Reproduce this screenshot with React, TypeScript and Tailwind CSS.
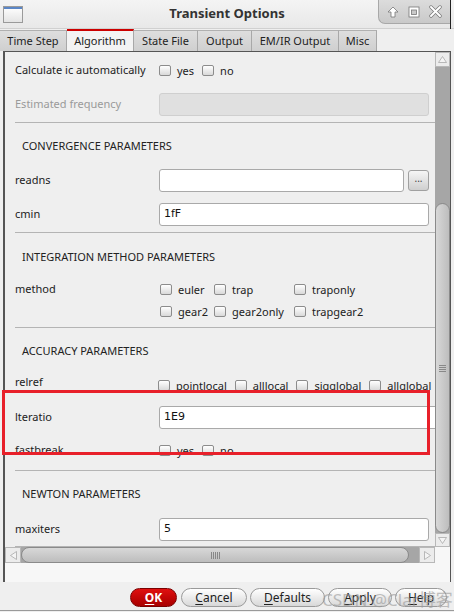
import React from "react";

const FONT = { fontFamily: '"Noto Sans", "Open Sans", "DejaVu Sans", sans-serif' };

function Check({ label }: { label: string }) {
  return (
    <div className="flex items-center">
      <span className="h-[11px] w-[12px] rounded-[2px] border border-[#8c8c8c] bg-gradient-to-b from-[#ffffff] to-[#d9d9d9]" />
      <span className="ml-[6px] text-[11px] leading-none text-[#222]">{label}</span>
    </div>
  );
}

function Field({ value, disabled }: { value?: string; disabled?: boolean }) {
  return (
    <div
      className={
        disabled
          ? "h-[23px] flex-1 rounded-[3px] border border-[#cfcfcf] bg-[#e0e0e0]"
          : "flex h-[23px] flex-1 items-center rounded-[3px] border border-[#a9a9a9] bg-white pl-[4px] text-[11px] font-medium text-[#111]"
      }
      style={{ fontFamily: '"DejaVu Sans", sans-serif' }}
    >
      {value}
    </div>
  );
}

function Row({ label, children, className, gray }: { label: string; children: React.ReactNode; className?: string; gray?: boolean }) {
  return (
    <div className={"flex items-center pl-[10px] pr-[6px] " + (className ?? "")}>
      <div className={"w-[144px] shrink-0 text-[11px] " + (gray ? "text-[#9a9a9a]" : "text-[#222]")}>{label}</div>
      {children}
    </div>
  );
}

function Sep({ className }: { className?: string }) {
  return <div className={"ml-[10px] h-px bg-[#b4b4b4] " + (className ?? "")} />;
}

function Heading({ text, h }: { text: string; h: string }) {
  return <div className={"flex items-center pl-[17px] text-[11px] text-[#222] " + h}>{text}</div>;
}

function Pill({ children, red }: { children: React.ReactNode; red?: boolean }) {
  return (
    <div
      className={
        red
          ? "flex h-[19px] w-[47px] items-center justify-center rounded-full border border-[#7a0000] bg-gradient-to-b from-[#e01010] to-[#a80000] text-[12px] font-bold text-white"
          : "flex h-[19px] items-center justify-center rounded-full border border-[#9a9a9a] bg-gradient-to-b from-[#ffffff] to-[#d8d8d8] text-[12px] text-[#222]"
      }
    >
      {children}
    </div>
  );
}

export default function App() {
  const tabs = ["Time Step", "Algorithm", "State File", "Output", "EM/IR Output", "Misc"];
  const tabW = ["w-[67px]", "w-[67px]", "w-[64px]", "w-[54px]", "w-[87px]", "w-[38px]"];
  return (
    <div className="relative h-[612px] w-[454px] overflow-hidden bg-[#efefef]" style={FONT}>
      {/* title bar */}
      <div className="relative flex h-[29px] items-center border-b border-[#d0d0d0] bg-gradient-to-b from-[#f4f4f4] to-[#e8e8e8]">
        <div className="ml-[3px] h-[17px] w-[20px] border border-[#9a9a9a] bg-gradient-to-b from-[#ffffff] to-[#e4e4e4]">
          <div className="h-[2px] bg-[#5b86c6]" />
        </div>
        <div className="absolute left-0 right-0 top-[4px] text-center text-[13px] font-bold text-[#333]">Transient Options</div>
        <div className="absolute right-[4px] top-0 flex h-[24px] w-[72px] items-center justify-around rounded-bl-[7px] border-b border-l border-[#a8a8a8] bg-gradient-to-b from-[#dcdcdc] to-[#c9c9c9] px-[4px]">
          <svg width="12" height="12" viewBox="0 0 12 12">
            <path d="M6 1 L11 6 L8 6 L8 11 L4 11 L4 6 L1 6 Z" fill="#fff" stroke="#777" strokeWidth="0.8" />
          </svg>
          <svg width="12" height="12" viewBox="0 0 12 12">
            <rect x="1" y="1" width="10" height="10" fill="#fff" stroke="#777" strokeWidth="0.8" />
            <rect x="3.5" y="4" width="5" height="4.5" fill="#c9c9c9" stroke="#777" strokeWidth="0.8" />
          </svg>
          <svg width="13" height="13" viewBox="0 0 13 13">
            <path d="M2 2 L11 11 M11 2 L2 11" stroke="#777" strokeWidth="3.4" strokeLinecap="round" />
            <path d="M2 2 L11 11 M11 2 L2 11" stroke="#fff" strokeWidth="2" strokeLinecap="round" />
          </svg>
        </div>
        <div className="absolute right-[3px] top-0 h-[29px] w-px bg-[#222]" />
      </div>

      {/* tabs */}
      <div className="flex h-[22px] items-end">
        {tabs.map((t, i) => (
          <div
            key={t}
            className={
              (i === 1
                ? "h-[22px] border-t-2 border-t-[#cc0000] bg-[#f3f3f3] "
                : "h-[21px] border-t border-t-[#b0b0b0] bg-gradient-to-b from-[#dedede] to-[#cfcfcf] ") +
              "flex items-center justify-center border-r border-[#a8a8a8] text-[11px] text-[#222] " +
              tabW[i]
            }
          >
            {t}
          </div>
        ))}
      </div>

      {/* frame */}
      <div className="ml-[3px] mr-[3px] flex h-[531px] flex-col border-l-2 border-r border-t border-[#555] bg-[#f7f7f7]">
        <div className="flex h-[495px]">
          <div className="relative h-[495px] w-[430px] overflow-hidden bg-[#efefef] pt-[6px]">
            <Row label="Calculate ic automatically" className="h-[24px]">
              <div className="flex items-center gap-[8px]">
                <Check label="yes" />
                <Check label="no" />
              </div>
            </Row>
            <Row label="Estimated frequency" className="mt-[11px]" gray>
              <Field disabled />
            </Row>
            <Sep className="mt-[6px]" />
            <Heading text="CONVERGENCE PARAMETERS" h="h-[46px]" />
            <Row label="readns">
              <Field />
              <div className="ml-[4px] flex h-[21px] w-[21px] items-start justify-center rounded-[3px] border border-[#a0a0a0] bg-gradient-to-b from-[#f6f6f6] to-[#cfcfcf] text-[10px] leading-[14px] text-[#444]">
                ...
              </div>
            </Row>
            <Row label="cmin" className="mt-[11px]">
              <Field value="1fF" />
            </Row>
            <Sep className="mt-[6px]" />
            <Heading text="INTEGRATION METHOD PARAMETERS" h="h-[48px]" />
            <div className="flex pl-[10px]">
              <div className="flex h-[16px] w-[145px] shrink-0 items-center text-[11px] text-[#222]">method</div>
              <div className="grid grid-cols-[54px_80px_80px] gap-y-[6px]">
                {["euler", "trap", "traponly", "gear2", "gear2only", "trapgear2"].map((c) => (
                  <div key={c} className="flex h-[16px] items-center">
                    <Check label={c} />
                  </div>
                ))}
              </div>
            </div>
            <Sep className="mt-[8px]" />
            <Heading text="ACCURACY PARAMETERS" h="h-[46px]" />
            <div className="flex h-[20px] items-center pl-[10px]">
              <div className="w-[143px] shrink-0 pb-[4px] text-[11px] text-[#222]">relref</div>
              <div className="flex shrink-0 items-center gap-[8px] whitespace-nowrap pt-[2px]">
                <Check label="pointlocal" />
                <Check label="alllocal" />
                <Check label="sigglobal" />
                <Check label="allglobal" />
              </div>
            </div>
            <div className="mt-[12px] flex items-center pl-[10px]">
              <div className="w-[144px] shrink-0 text-[11px] text-[#222]">lteratio</div>
              <div className="w-[300px] shrink-0">
                <div className="flex">
                  <Field value="1E9" />
                </div>
              </div>
            </div>
            <Row label="fastbreak" className="mt-[12px] h-[18px]">
              <div className="flex items-center gap-[8px]">
                <Check label="yes" />
                <Check label="no" />
              </div>
            </Row>
            <Sep className="mt-[11px]" />
            <Heading text="NEWTON PARAMETERS" h="h-[47px]" />
            <Row label="maxiters">
              <Field value="5" />
            </Row>
            <Sep className="mt-[5px]" />
          </div>

          {/* vertical scrollbar */}
          <div className="flex w-[15px] flex-col bg-[#a6a6a6]">
            <div className="flex h-[15px] items-center justify-center border border-[#b8b8b8] bg-[#ececec]">
              <svg width="9" height="7" viewBox="0 0 9 7">
                <path d="M4.5 0.5 L8.5 6.5 L0.5 6.5 Z" fill="#f4f4f4" stroke="#aaa" strokeWidth="0.8" />
              </svg>
            </div>
            <div className="h-[136px]" />
            <div className="relative flex h-[330px] items-center justify-center rounded-full border border-[#8a8a8a] bg-gradient-to-r from-[#d8d8d8] to-[#bdbdbd]">
              <div className="flex flex-col gap-[1px]">
                <div className="h-px w-[7px] bg-[#888]" />
                <div className="h-px w-[7px] bg-[#888]" />
                <div className="h-px w-[7px] bg-[#888]" />
                <div className="h-px w-[7px] bg-[#888]" />
              </div>
            </div>
            <div className="flex flex-1 items-center justify-center border border-[#b8b8b8] bg-[#ececec]">
              <svg width="9" height="7" viewBox="0 0 9 7">
                <path d="M0.5 0.5 L8.5 0.5 L4.5 6.5 Z" fill="#f4f4f4" stroke="#aaa" strokeWidth="0.8" />
              </svg>
            </div>
          </div>
        </div>

        {/* horizontal scrollbar */}
        <div className="flex h-[16px] w-[430px] bg-[#a6a6a6]">
          <div className="flex w-[16px] items-center justify-center border border-[#b8b8b8] bg-[#ececec]">
            <svg width="7" height="9" viewBox="0 0 7 9">
              <path d="M0.5 4.5 L6.5 0.5 L6.5 8.5 Z" fill="#f4f4f4" stroke="#aaa" strokeWidth="0.8" />
            </svg>
          </div>
          <div className="flex h-[16px] w-[388px] items-center justify-center rounded-full border border-[#8a8a8a] bg-gradient-to-b from-[#d8d8d8] to-[#bdbdbd]">
            <div className="flex gap-[1px]">
              {[0, 1, 2, 3, 4].map((i) => (
                <div key={i} className="h-[7px] w-px bg-[#888]" />
              ))}
            </div>
          </div>
          <div className="w-[10px]" />
          <div className="flex w-[16px] items-center justify-center border border-[#b8b8b8] bg-[#ececec]">
            <svg width="7" height="9" viewBox="0 0 7 9">
              <path d="M6.5 4.5 L0.5 0.5 L0.5 8.5 Z" fill="#f4f4f4" stroke="#aaa" strokeWidth="0.8" />
            </svg>
          </div>
        </div>
        <div className="flex-1 bg-[#f7f7f7]" />
      </div>

      {/* buttons */}
      <div className="mt-[6px] flex items-center pl-[130px]">
        <Pill red>
          <span className="underline underline-offset-2">O</span>K
        </Pill>
        <div className="ml-[4px] w-[66px]">
          <Pill>
            <span className="underline underline-offset-2">C</span>ancel
          </Pill>
        </div>
        <div className="ml-[3px] w-[75px]">
          <Pill>
            <span className="underline underline-offset-2">D</span>efaults
          </Pill>
        </div>
        <div className="ml-[3px] w-[64px]">
          <Pill>
            <span className="underline underline-offset-2">A</span>pply
          </Pill>
        </div>
        <div className="ml-[3px] w-[52px]">
          <Pill>
            <span className="underline underline-offset-2">H</span>elp
          </Pill>
        </div>
      </div>
      <div className="mt-[3px] h-px bg-[#9a9a9a]" />

      {/* watermark */}
      <div
        className="pointer-events-none absolute left-[322px] top-[587px] text-[17px] text-[#9a9a9a] opacity-60"
        style={{ fontFamily: '"Noto Sans", "Noto Sans CJK SC", sans-serif' }}
      >
        CSDN @Clar博客
      </div>

      {/* highlight */}
      <div className="pointer-events-none absolute left-[2px] top-[390px] h-[65px] w-[428px] border-[3px] border-[#e8202a]" />
    </div>
  );
}
